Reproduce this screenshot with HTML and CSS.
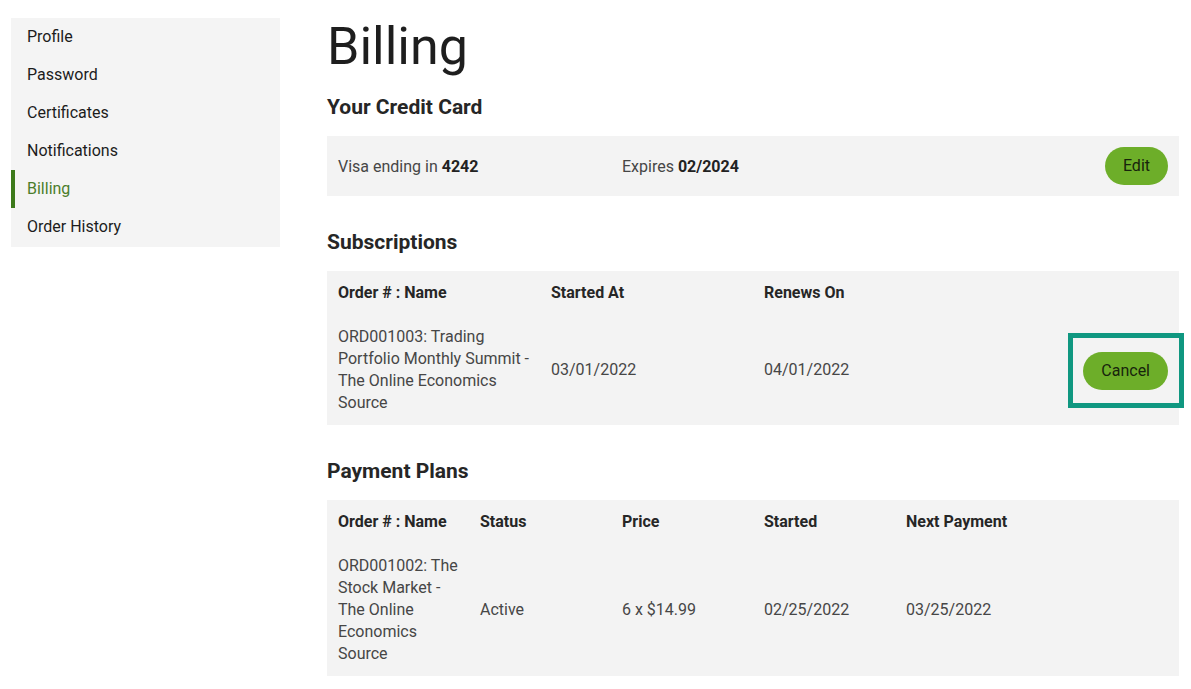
FILE: index.html
```html
<!DOCTYPE html>
<html lang="en">
<head>
    <meta charset="UTF-8">
    <meta name="viewport" content="width=device-width, initial-scale=1.0">
    <title>Billing</title>
    <link rel="stylesheet" href="styles.css">
</head>
<body>
    <div class="page">
        <ul class="side-nav">
            <li><a href="#">Profile</a></li>
            <li><a href="#">Password</a></li>
            <li><a href="#">Certificates</a></li>
            <li><a href="#">Notifications</a></li>
            <li class="active"><a href="#">Billing</a></li>
            <li><a href="#">Order History</a></li>
        </ul>

        <main class="content">
            <h1>Billing</h1>

            <h2>Your Credit Card</h2>
            <div class="card-row">
                <div>Visa ending in <b>4242</b></div>
                <div>Expires <b>02/2024</b></div>
                <div class="right"><button class="btn">Edit</button></div>
            </div>

            <h2>Subscriptions</h2>
            <table class="grid">
                <thead>
                    <tr>
                        <th>Order # : Name</th>
                        <th>Started At</th>
                        <th>Renews On</th>
                        <th></th>
                    </tr>
                </thead>
                <tbody>
                    <tr>
                        <td>ORD001003: Trading Portfolio Monthly Summit - The Online Economics Source</td>
                        <td>03/01/2022</td>
                        <td>04/01/2022</td>
                        <td class="right"><span class="focus"><button class="btn">Cancel</button></span></td>
                    </tr>
                </tbody>
            </table>

            <h2>Payment Plans</h2>
            <table class="grid">
                <thead>
                    <tr>
                        <th>Order # : Name</th>
                        <th>Status</th>
                        <th>Price</th>
                        <th>Started</th>
                        <th>Next Payment</th>
                        <th></th>
                    </tr>
                </thead>
                <tbody>
                    <tr>
                        <td>ORD001002: The Stock Market - The Online Economics Source</td>
                        <td>Active</td>
                        <td>6 x $14.99</td>
                        <td>02/25/2022</td>
                        <td>03/25/2022</td>
                        <td></td>
                    </tr>
                </tbody>
            </table>
        </main>
    </div>
</body>
</html>
```

FILE: styles.css
```css
*{
    margin: 0;
    padding: 0;
    box-sizing: border-box;
}
body{
    font-family: Roboto, "Liberation Sans", sans-serif;
    font-size: 16px;
    color: #222222;
    background: #ffffff;
}
.page{
    display: flex;
    gap: 47px;
    padding: 18px 12px 0 11px;
}

/* left menu */
.side-nav{
    flex: 0 0 269px;
    align-self: flex-start;
    list-style: none;
    background: #f4f4f4;
    padding-bottom: 1px;
}
.side-nav li{
    border-left: 4px solid transparent;
}
.side-nav a{
    display: block;
    height: 38px;
    line-height: 38px;
    padding-left: 12px;
    color: #1c1c1c;
    text-decoration: none;
}
.side-nav .active{
    border-left-color: #3d7a1b;
}
.side-nav .active a{
    color: #4b7d2b;
}

/* main column */
.content{
    flex: 1;
}
h1{
    font-size: 52px;
    font-weight: 400;
    line-height: 58px;
    color: #1e1e1e;
}
h2{
    font-size: 21px;
    font-weight: 700;
    line-height: 30px;
    margin: 31px 0 14px;
    color: #262626;
}
h1 + h2{
    margin-top: 16px;
}

.card-row{
    display: grid;
    grid-template-columns: 1fr 1fr 1fr;
    align-items: center;
    background: #f3f3f3;
    color: #464646;
}
.card-row > div{
    padding: 11px;
}
.card-row b{
    color: #222222;
}
.right{
    text-align: right;
}

.btn{
    font-family: inherit;
    font-size: 16px;
    line-height: 38px;
    height: 38px;
    padding: 0 18px;
    border: none;
    border-radius: 19px;
    background: #6dae29;
    color: #17240c;
    cursor: pointer;
}

.grid{
    width: 100%;
    table-layout: fixed;
    border-collapse: collapse;
    background: #f3f3f3;
}
.grid th, .grid td{
    padding: 11px 0 11px 11px;
    line-height: 22px;
    text-align: left;
    vertical-align: middle;
}
.grid th{
    font-weight: 700;
    color: #262626;
}
.grid td{
    color: #464646;
}
.grid td.right{
    text-align: right;
}

/* highlight frame around the cancel button */
.focus{
    display: inline-block;
    padding: 14px 11px 13px 10px;
    outline: 5px solid #0f9780;
    line-height: 0;
}
```
